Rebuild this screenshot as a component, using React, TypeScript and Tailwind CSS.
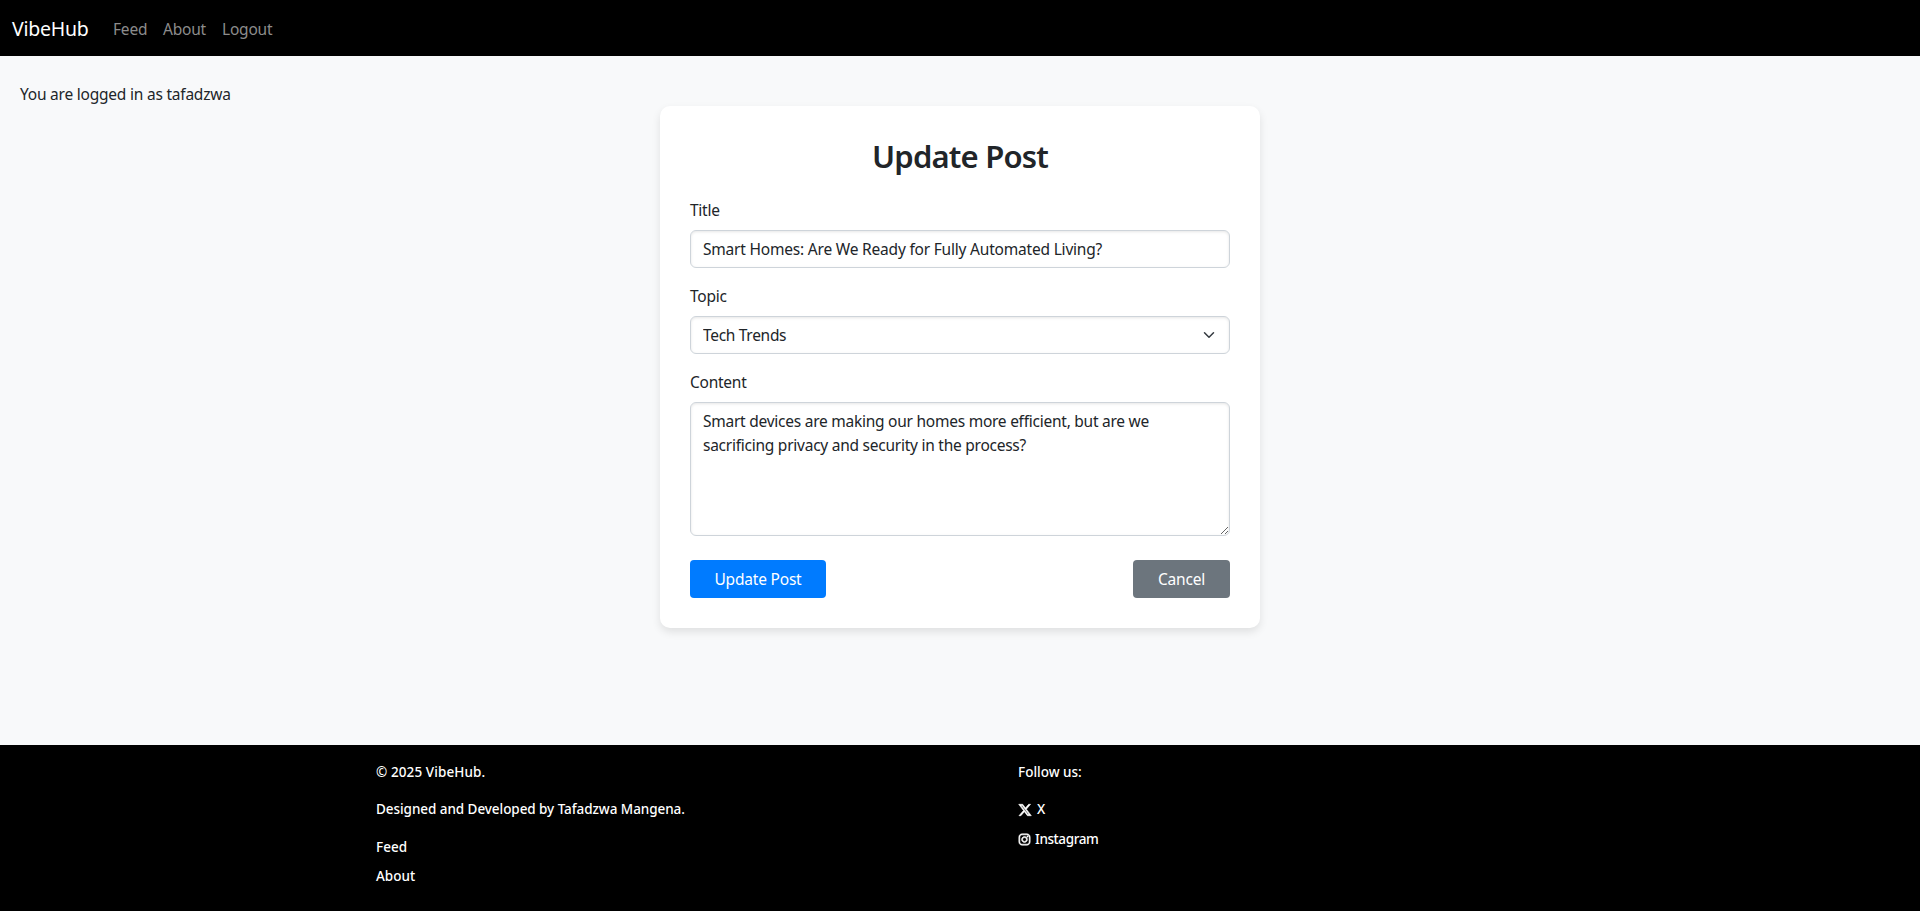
import React from "react";
import { FaXTwitter, FaInstagram } from "react-icons/fa6";

const fieldClass =
  "block w-full rounded-md border border-[#ced4da] bg-white px-3 text-[15.5px] leading-6 text-[#212529] shadow-[inset_0_1px_3px_rgba(0,0,0,0.1)] outline-none";

const labelClass = "mb-2 block text-[15.5px] leading-6 tracking-[-0.25px]";

function Navbar() {
  return (
    <nav className="flex h-14 items-center bg-black pt-px pl-3 text-[15.5px] leading-6 tracking-[-0.2px] text-[#8c8c8c]">
      <a className="mr-6 w-[77px] text-[19.5px] leading-[30px] tracking-[-0.25px] whitespace-nowrap text-white">VibeHub</a>
      <a className="w-[50px]">Feed</a>
      <a className="w-[59px]">About</a>
      <a>Logout</a>
    </nav>
  );
}

function PostForm() {
  return (
    <form className="mx-auto h-[522px] w-[600px] rounded-[10px] bg-white p-[30px] shadow-[0_4px_8px_rgba(0,0,0,0.1)]">
      <h2 className="mb-[23px] pt-px text-center text-[31px] leading-[38px] font-semibold tracking-[-0.8px]">Update Post</h2>
      <label className={labelClass} htmlFor="title">Title</label>
      <input
        id="title"
        className={`${fieldClass} h-[38px] tracking-[-0.2px]`}
        defaultValue="Smart Homes: Are We Ready for Fully Automated Living?"
      />
      <label className={`${labelClass} mt-4`} htmlFor="topic">Topic</label>
      <div className="relative">
        <select id="topic" className={`${fieldClass} h-[38px] appearance-none tracking-[-0.3px]`}>
          <option>Tech Trends</option>
        </select>
        <svg className="pointer-events-none absolute top-[13px] right-[13px] h-3 w-4" viewBox="0 0 16 16" fill="none">
          <path d="m2 5 6 6 6-6" stroke="#343a40" strokeWidth="2" strokeLinecap="round" strokeLinejoin="round" />
        </svg>
      </div>
      <label className={`${labelClass} mt-4`} htmlFor="content">Content</label>
      <textarea
        id="content"
        className={`${fieldClass} h-[134px] resize py-1.5 tracking-[-0.25px]`}
        defaultValue={"Smart devices are making our homes more efficient, but are we\nsacrificing privacy and security in the process?"}
      />
      <div className="mt-6 flex justify-between text-[15.5px] tracking-[-0.2px] text-white">
        <button type="button" className="h-[38px] w-[136px] rounded bg-[#007bff] pt-0.5">Update Post</button>
        <button type="button" className="h-[38px] w-[97px] rounded bg-[#6c757d] pt-0.5">Cancel</button>
      </div>
    </form>
  );
}

function Footer() {
  return (
    <footer className="flex h-[166px] bg-black pt-[17px] pl-[376px] text-[13.5px] leading-[21px] font-medium text-white">
      <div className="w-[642px]">
        <p className="mb-4 tracking-[0.1px]">© 2025 VibeHub.</p>
        <p className="mb-[17px] tracking-[-0.06px]">Designed and Developed by Tafadzwa Mangena.</p>
        <p className="mb-2">Feed</p>
        <p>About</p>
      </div>
      <div>
        <p className="mb-4">Follow us:</p>
        <p className="mb-[9px] flex items-center gap-[5px]">
          <FaXTwitter className="size-[14px] stroke-white" strokeWidth={22} />X
        </p>
        <p className="flex items-center gap-1 tracking-[-0.4px]">
          <FaInstagram className="size-[13px] stroke-white" strokeWidth={24} />Instagram
        </p>
      </div>
    </footer>
  );
}

export default function App() {
  return (
    <div className="flex h-[911px] flex-col overflow-hidden bg-[#f8f9fa] font-['Noto_Sans',sans-serif] text-[#212529]">
      <Navbar />
      <main className="flex-1 pt-[26px]">
        <p className="pl-5 text-[15.5px] leading-6 tracking-[-0.22px]">You are logged in as tafadzwa</p>
        <PostForm />
      </main>
      <Footer />
    </div>
  );
}
